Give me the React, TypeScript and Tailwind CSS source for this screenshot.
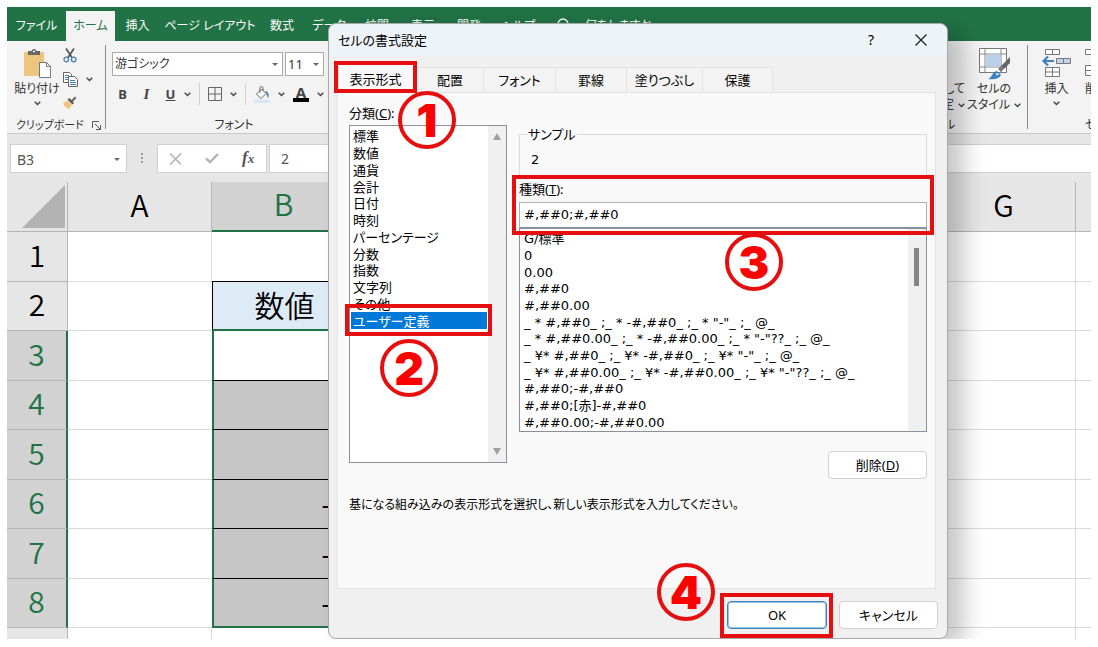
import type { ReactNode } from 'react'

const menuTabs = [
  { name: 'ファイル', width: 'w-[59px]' },
  { name: 'ホーム', width: 'w-[49px]', active: true },
  { name: '挿入', width: 'w-[45px]' },
  { name: 'ページ レイアウト', width: 'w-[100px]' },
  { name: '数式', width: 'w-[44px]' },
  { name: 'データ', width: 'w-[50px]' },
  { name: '校閲', width: 'w-[46px]' },
  { name: '表示', width: 'w-[46px]' },
  { name: '開発', width: 'w-[46px]' },
  { name: 'ヘルプ', width: 'w-[52px]' },
]

const dialogTabs = [
  { name: '配置', width: 'w-[67px]' },
  { name: 'フォント', width: 'w-[72px]' },
  { name: '罫線', width: 'w-[71px]' },
  { name: '塗りつぶし', width: 'w-[76px]' },
  { name: '保護', width: 'w-[70px]' },
]

const categories = [
  '標準',
  '数値',
  '通貨',
  '会計',
  '日付',
  '時刻',
  'パーセンテージ',
  '分数',
  '指数',
  '文字列',
  'その他',
  'ユーザー定義',
]

const formats = [
  'G/標準',
  '0',
  '0.00',
  '#,##0',
  '#,##0.00',
  '_ * #,##0_ ;_ * -#,##0_ ;_ * "-"_ ;_ @_ ',
  '_ * #,##0.00_ ;_ * -#,##0.00_ ;_ * "-"??_ ;_ @_ ',
  '_ ¥* #,##0_ ;_ ¥* -#,##0_ ;_ ¥* "-"_ ;_ @_ ',
  '_ ¥* #,##0.00_ ;_ ¥* -#,##0.00_ ;_ ¥* "-"??_ ;_ @_ ',
  '#,##0;-#,##0',
  '#,##0;[赤]-#,##0',
  '#,##0.00;-#,##0.00',
]

const rows = [
  { n: 1, value: '' },
  { n: 2, value: '数値' },
  { n: 3, value: '' },
  { n: 4, value: '' },
  { n: 5, value: '' },
  { n: 6, value: '-1' },
  { n: 7, value: '-2' },
  { n: 8, value: '-3' },
]

function Chevron() {
  return (
    <svg className="w-[7px] h-[5px] shrink-0" viewBox="0 0 7 5" fill="none" stroke="#444" strokeWidth={1.4}>
      <path d="M0.7 0.8 3.5 3.6 6.3 0.8" />
    </svg>
  )
}

function DownArrow() {
  return (
    <svg className="w-[6px] h-[3px] shrink-0" viewBox="0 0 6 3" fill="#666">
      <path d="M0 0h6L3 3z" />
    </svg>
  )
}

function PasteIcon() {
  return (
    <svg className="w-[28px] h-[31px]" viewBox="0 0 28 31">
      <path d="M1 4h20v24H1z" fill="#edc57f" />
      <path d="M5 3h3.500a2.600 2.600 0 0 1 5 0H17v4H5z" fill="#666" />
      <path d="M10 3.500h2" stroke="#fff" strokeWidth="1.500" />
      <path d="M16.500 14.500h7l4 4v11h-11z" fill="#fff" stroke="#777" />
      <path d="M23.500 14.500v4h4" fill="none" stroke="#777" />
    </svg>
  )
}

function CutIcon() {
  return (
    <svg className="w-[14px] h-[15px]" viewBox="0 0 14 15" fill="none">
      <path d="M3 0.500 9.300 10M11 0.500 4.700 10" stroke="#555" strokeWidth="1.700" />
      <circle cx="3.300" cy="11.500" r="2.300" stroke="#4a7fb5" strokeWidth="1.300" />
      <circle cx="10.700" cy="11.500" r="2.300" stroke="#4a7fb5" strokeWidth="1.300" />
    </svg>
  )
}

function CopyIcon() {
  return (
    <svg className="w-[15px] h-[15px]" viewBox="0 0 15 15" fill="#fff" stroke="#666">
      <path d="M0.500 0.500h6l2 2v8h-8z" />
      <path d="M2 3.500h4M2 5.500h4M2 7.500h4" stroke="#4a7fb5" />
      <path d="M5.500 4.500h6l3 3v7h-9z" />
      <path d="M7 8.500h5M7 10.500h6M7 12.500h6" stroke="#4a7fb5" />
    </svg>
  )
}

function BrushIcon() {
  return (
    <svg className="w-[14px] h-[13px]" viewBox="0 0 14 13">
      <path d="M0 7 5 4.500 9 9 6 13C3 12 1 10 0 7z" fill="#edc57f" />
      <path d="M4.500 3.500 6.500 2 11 7 9.500 8.500z" fill="#555" />
      <path d="M8 4.500 12 0.500 13.500 2 9.500 6z" fill="#666" />
    </svg>
  )
}

function LauncherIcon() {
  return (
    <svg className="w-[9px] h-[9px] shrink-0" viewBox="0 0 9 9" fill="none" stroke="#555">
      <path d="M0.500 7V0.500H7M3 3l5 5M8.500 4v4.500H4" />
    </svg>
  )
}

function BordersIcon() {
  return (
    <svg className="w-[14px] h-[14px]" viewBox="0 0 14 14" fill="none" stroke="#666">
      <path d="M0.500 0.500h13v13H0.500zM7 0.500v13M0.500 7h13" />
    </svg>
  )
}

function BucketIcon() {
  return (
    <svg className="w-[16px] h-[17px]" viewBox="0 0 16 17">
      <rect x="0" y="13.500" width="16" height="3.500" fill="#d6e8f7" />
      <path d="M2.500 8 7.500 3 12 7.500 7 12.500z" fill="#fff" stroke="#666" />
      <path d="M6 7V2a1.500 1.500 0 0 1 3 0v3" fill="none" stroke="#666" />
      <path d="M11 5c3 0 4.500 3 3.300 7C13 11 13 8 11 5z" fill="#4a7fb5" />
    </svg>
  )
}

function CellStyleIcon() {
  return (
    <svg className="w-[31px] h-[32px] shrink-0" viewBox="0 0 31 32">
      <path d="M0.500 0.500h27v24h-27z" fill="#fff" stroke="#777" />
      <path d="M6 0.500v24M22 0.500v24M0.500 6h27M0.500 19h27" fill="none" stroke="#888" />
      <path d="M6.500 6.500h15v12h-15z" fill="#bcd0ea" />
      <path d="M31 9v6l-6 6-3-3z" fill="#666" />
      <path d="M20.500 19.500l3 3" stroke="#777" strokeWidth="4" />
      <path d="M9 31c4-1 4-7 9-8l4 4c-2 4-7 5-13 4z" fill="#3f7fbd" />
      <path d="M17 26.500l2.500-.5" stroke="#fff" strokeWidth="1.500" />
    </svg>
  )
}

function InsertCellsIcon() {
  return (
    <svg className="w-[29px] h-[29px] shrink-0" viewBox="0 0 29 29" fill="#fff" stroke="#777">
      <path d="M3.500 0.500h14v5h-14zM10.500 0.500v5" />
      <path d="M14.500 9.500h14v5h-14zM21.500 9.500v5" fill="#c3d3ea" />
      <path d="M3.500 18.500h14v9h-14zM10.500 18.500v9M3.500 23h14" />
      <path d="M12 12H2M6 7.500 1.500 12 6 16.500" fill="none" stroke="#3f7fbd" strokeWidth="2.200" />
    </svg>
  )
}

function DeleteCellsIcon() {
  return (
    <svg className="w-[29px] h-[29px] shrink-0" viewBox="0 0 29 29" fill="#fff" stroke="#777">
      <path d="M0.500 0.500h14v5h-14zM7.500 0.500v5" />
      <path d="M12.500 9.500h14v5h-14z" fill="#c3d3ea" />
      <path d="M0.500 16.500h14v10h-14zM7.500 16.500v10M0.500 21.500h14" />
      <path d="M19 16l8 8M27 16l-8 8" fill="none" stroke="#d04a3a" strokeWidth="2.200" />
    </svg>
  )
}

function Divider() {
  return <div className="w-px h-[22px] bg-[#d0d0d0]" />
}

function Ribbon() {
  return (
    <div className="flex h-[93px] overflow-hidden bg-[#f3f3f3] border-b border-[#c8c8c8] text-xs leading-4 text-[#333] whitespace-nowrap">
      <div className="flex flex-col w-[98px] shrink-0 pt-[7px]">
        <div className="flex h-[69px]">
          <button className="flex flex-col items-center w-[56px] pl-1" aria-label="貼り付け">
            <PasteIcon />
            <span className="pt-[2px] pb-1">貼り付け</span>
            <Chevron />
          </button>
          <div className="flex flex-col items-start gap-[9px]">
            <button aria-label="切り取り"><CutIcon /></button>
            <button className="flex items-center gap-2" aria-label="コピー">
              <CopyIcon />
              <Chevron />
            </button>
            <button aria-label="書式のコピー"><BrushIcon /></button>
          </div>
        </div>
        <div className="flex items-center justify-between pl-[9px] pr-1 text-[11px]">
          クリップボード
          <LauncherIcon />
        </div>
      </div>
      <div className="w-px shrink-0 my-1 bg-[#8a8a8a]" />
      <div className="flex flex-col w-[256px] shrink-0 pt-[11px] pl-[6px]">
        <div className="flex gap-[2px]">
          <button className="flex items-center justify-between w-[171px] h-6 pl-[2px] pr-1 bg-white border border-[#ababab]" aria-label="フォント名">
            游ゴシック
            <DownArrow />
          </button>
          <button className="flex items-center justify-between w-[39px] h-6 pl-[2px] pr-1 bg-white border border-[#ababab] text-[13px]" aria-label="フォント サイズ">
            11
            <DownArrow />
          </button>
        </div>
        <div className="flex items-center h-[22px] mt-[7px] pl-[5px] text-[13px] text-[#444]">
          <button className="w-[11px] font-bold">B</button>
          <button className="w-[37px] font-['Liberation_Serif',serif] font-bold italic text-[15px]">I</button>
          <button className="w-[11px] font-bold underline">U</button>
          <div className="flex items-center gap-2 pl-2">
            <Chevron />
            <Divider />
            <BordersIcon />
            <Chevron />
            <Divider />
            <BucketIcon />
            <Chevron />
            <button className="w-[16px] h-[16px] border-b-4 border-black font-bold text-[15px] leading-[12px]">A</button>
            <Chevron />
          </div>
        </div>
        <div className="pt-3 pr-[6px] text-center">フォント</div>
      </div>
      <div className="flex flex-col w-[142px] shrink-0 ml-[518px] pt-[7px]">
        <div className="flex h-[69px]">
          <div className="flex flex-col items-end w-[85px] shrink-0 pt-[33px]">
            <span>テーブルとして</span>
            <span className="flex items-center gap-1">書式設定<Chevron /></span>
          </div>
          <button className="flex flex-col items-center w-[56px] shrink-0 ml-px">
            <CellStyleIcon />
            <span className="pt-px">セルの</span>
            <span className="flex items-center gap-1">スタイル<Chevron /></span>
          </button>
        </div>
        <div className="pl-8">スタイル</div>
      </div>
      <div className="w-px shrink-0 ml-[5px] my-1 bg-[#8a8a8a]" />
      <div className="flex shrink-0 pt-2 pl-[14px] gap-[14px]">
        <button className="flex flex-col items-center w-[29px]">
          <InsertCellsIcon />
          <span className="pt-[3px] pb-1">挿入</span>
          <Chevron />
        </button>
        <div className="flex flex-col h-[84px]">
          <DeleteCellsIcon />
          <span className="pt-[3px]">削除</span>
          <span className="mt-auto">セル</span>
        </div>
      </div>
    </div>
  )
}

function FormulaBar() {
  return (
    <div className="flex items-stretch h-12 pt-[10px] pb-[9px] pl-[3px] bg-[#e6e6e6] text-[#555] text-[14px]">
      <div className="flex items-center justify-between w-[117px] shrink-0 px-[6px] pt-px bg-white border border-[#d0d0d0]">
        B3
        <DownArrow />
      </div>
      <svg className="w-[30px] h-full shrink-0" viewBox="0 0 30 29" fill="#999">
        <path d="M14 9h2v2h-2zM14 13h2v2h-2zM14 17h2v2h-2z" />
      </svg>
      <div className="flex items-center w-[110px] shrink-0 pl-[11px] gap-[23px] bg-white border border-[#d0d0d0]">
        <button aria-label="キャンセル">
          <svg className="w-[13px] h-[12px]" viewBox="0 0 13 12" stroke="#b5b5b5" strokeWidth={1.7}>
            <path d="M1 0.500 12 11.500M12 0.500 1 11.500" />
          </svg>
        </button>
        <button aria-label="入力">
          <svg className="w-[14px] h-[11px]" viewBox="0 0 14 11" fill="none" stroke="#b5b5b5" strokeWidth={2.4}>
            <path d="M1 5.500 5 9 13 1" />
          </svg>
        </button>
        <button className="font-['Liberation_Serif',serif] italic font-bold text-[17px] leading-5" aria-label="関数の挿入">
          f<span className="text-[13px]">x</span>
        </button>
      </div>
      <input
        className="flex-1 min-w-0 ml-[2px] pl-[11px] bg-white border border-r-0 border-[#d0d0d0] outline-none"
        aria-label="数式バー"
        defaultValue="2"
      />
    </div>
  )
}

function Sheet() {
  const others = ['C', 'D', 'E', 'F', 'G', 'H']
  return (
    <table className="w-full table-fixed border-separate border-spacing-0 bg-white font-['Noto_Sans_CJK_JP',sans-serif] font-[350] text-[30px] leading-9 text-black">
      <colgroup>
        <col className="w-[61px]" />
        <col className="w-[144px]" />
        <col className="w-[144px]" />
        <col className="w-[144px]" />
        <col className="w-[144px]" />
        <col className="w-[144px]" />
        <col className="w-[144px]" />
        <col className="w-[144px]" />
        <col />
      </colgroup>
      <thead>
        <tr className="bg-[#e6e6e6]">
          <th className="h-[50px] p-0 border-b border-r border-[#b5b5b5]">
            <svg className="w-[43px] h-[43px] ml-auto mr-[2px]" viewBox="0 0 43 43" fill="#b3b3b3">
              <path d="M43 0v43H0z" />
            </svg>
          </th>
          <th className="p-0 pb-[6px] font-[350] border-b border-r border-[#b5b5b5]">A</th>
          <th className="p-0 pb-[6px] font-[350] border-b-2 border-r border-b-[#217346] border-r-[#b5b5b5] bg-[#d2d2d2] text-[#217346]">B</th>
          {others.map(c => (
            <th key={c} className="p-0 pb-[6px] font-[350] border-b border-r border-[#b5b5b5] last:border-r-0">
              {c === 'H' ? '' : c}
            </th>
          ))}
        </tr>
      </thead>
      <tbody>
        {rows.map(row => (
          <tr key={row.n} className="h-[50px] even:h-[49px]">
            <th
              className={
                row.n > 2
                  ? 'p-0 pb-[6px] font-[350] bg-[#d2d2d2] text-[#217346] border-b border-r-2 border-b-[#b5b5b5] border-r-[#217346]'
                  : 'p-0 pb-[6px] font-[350] bg-[#e6e6e6] border-b border-r border-[#b5b5b5]'
              }
            >
              {row.n}
            </th>
            <td className={row.n > 1 ? 'p-0 border-b border-[#d9d9d9]' : 'p-0 border-b border-r border-[#d9d9d9]'} />
            {row.n === 1 && <td className="p-0 border-b border-r border-b-black border-r-[#d9d9d9]" />}
            {row.n === 2 && (
              <td className="p-0 pb-1 text-center bg-[#ddebf7] border-l border-b-2 border-l-black border-b-[#217346]">{row.value}</td>
            )}
            {row.n === 3 && <td className="p-0 border-l-2 border-b border-l-[#217346] border-b-black" />}
            {row.n > 3 && (
              <td
                className={`p-0 pb-1 pr-2 text-right bg-[#c6c6c6] border-l-2 border-l-[#217346] ${
                  row.n === 8 ? 'border-b-2 border-b-[#217346]' : 'border-b border-b-black'
                }`}
              >
                {row.value}
              </td>
            )}
            {others.map(c => (
              <td key={c} className="p-0 border-b border-r border-[#d9d9d9] last:border-r-0" />
            ))}
          </tr>
        ))}
        <tr>
          <th className="h-[11px] p-0 bg-[#e6e6e6] border-r border-[#b5b5b5]" />
          <td className="p-0 border-r border-[#d9d9d9]" />
          <td className="p-0 border-r border-[#d9d9d9]" />
          {others.map(c => (
            <td key={c} className="p-0 border-r border-[#d9d9d9] last:border-r-0" />
          ))}
        </tr>
      </tbody>
    </table>
  )
}

function Step({ place, children }: { place: string; children: ReactNode }) {
  return (
    <div
      className={`absolute flex items-center justify-center w-[58px] h-[58px] rounded-full border-4 border-[#e60f0f] font-['Inter',sans-serif] font-black text-[46px] leading-none text-[#ff0000] ${place}`}
    >
      {children}
    </div>
  )
}

function Mark({ place }: { place: string }) {
  return <div className={`absolute border-4 border-[#e60f0f] pointer-events-none ${place}`} />
}

function FormatDialog() {
  return (
    <div
      role="dialog"
      aria-label="セルの書式設定"
      className="absolute left-[321px] top-4 w-[620px] bg-[#f0f0f0] border border-[#a8a8a8] rounded-lg shadow-[16px_8px_22px_rgba(0,0,0,0.22)] text-[13px] leading-5 text-black"
    >
      <div className="flex items-center h-8 pl-[9px] pr-5 bg-[#eef3f8] rounded-t-lg">
        <h1 className="flex-1">セルの書式設定</h1>
        <button className="w-[14px] mr-[37px] text-[14px]" aria-label="ヘルプ">?</button>
        <button aria-label="閉じる">
          <svg className="w-[12px] h-[12px]" viewBox="0 0 12 12" stroke="#222" strokeWidth={1.3}>
            <path d="M0.500 0.500 11.500 11.500M11.500 0.500 0.500 11.500" />
          </svg>
        </button>
      </div>

      <div className="flex items-end pt-2 pl-[9px]" role="tablist">
        <button role="tab" aria-selected className="relative z-10 w-[79px] h-[29px] -mb-px pr-1 bg-[#f9f9f9] border border-b-0 border-[#e3e3e3]">
          表示形式
        </button>
        {dialogTabs.map(tab => (
          <button key={tab.name} role="tab" className={`h-[25px] bg-[#f3f3f3] border border-b-0 border-l-0 border-[#e3e3e3] ${tab.width}`}>
            {tab.name}
          </button>
        ))}
      </div>

      <div className="ml-2 mr-[11px] h-[497px] pt-[10px] pl-[11px] pr-2 bg-[#f9f9f9] border border-[#e3e3e3]">
        <div className="flex gap-3">
          <div className="w-[158px] shrink-0">
            <div id="category">分類(<u>C</u>):</div>
            <div className="flex h-[338px] mt-[2px] bg-white border border-[#8a8f98]">
              <ul role="listbox" aria-labelledby="category" className="flex flex-col flex-1 h-[203px] pt-[2px] pl-px pr-px">
                {categories.map(c => (
                  <li
                    key={c}
                    role="option"
                    aria-selected={c === 'ユーザー定義'}
                    className="flex items-center flex-1 pl-[2px] leading-4 aria-selected:bg-[#0078d7] aria-selected:text-white"
                  >
                    {c}
                  </li>
                ))}
              </ul>
              <div className="flex flex-col items-center justify-between w-[18px] py-[7px] bg-[#f0f0f0]">
                <svg className="w-[8px] h-[7px]" viewBox="0 0 8 7" fill="#a0a0a0"><path d="M4 0 8 7H0z" /></svg>
                <svg className="w-[8px] h-[7px]" viewBox="0 0 8 7" fill="#a0a0a0"><path d="M4 7 8 0H0z" /></svg>
              </div>
            </div>
          </div>

          <div className="flex flex-col flex-1 min-w-0 pt-[21px]">
            <fieldset className="h-[54px] px-[7px] border border-[#dcdcdc]">
              <legend className="px-px">サンプル</legend>
              <div className="pl-1 pt-[6px] font-['DejaVu_Sans',sans-serif]">2</div>
            </fieldset>
            <label htmlFor="type" className="mt-px">種類(<u>T</u>):</label>
            <input
              id="type"
              defaultValue="#,##0;#,##0"
              className="h-[26px] mt-[3px] pl-1 pb-[2px] bg-white border border-[#b0b0b0] border-b-[#8a8f98] font-['DejaVu_Sans',sans-serif] outline-none"
            />
            <div className="flex bg-white border border-[#8a8f98]">
              <ul role="listbox" aria-label="表示形式の一覧" className="flex flex-col flex-1 h-[202px] pt-[2px] pl-1 font-['DejaVu_Sans','Noto_Sans_CJK_JP',sans-serif]">
                {formats.map(f => (
                  <li key={f} role="option" className="flex items-center flex-1 leading-4 whitespace-pre">{f}</li>
                ))}
              </ul>
              <div className="w-[18px] pl-[6px] pt-[19px] bg-[#f0f0f0]">
                <div className="w-[5px] h-[38px] bg-[#858585]" />
              </div>
            </div>
            <button className="self-end w-[99px] h-7 mt-[19px] bg-white border border-[#d0d0d0] rounded">
              削除(<u>D</u>)
            </button>
          </div>
        </div>
        <p className="mt-4 text-xs leading-5">基になる組み込みの表示形式を選択し、新しい表示形式を入力してください。</p>
      </div>

      <div className="flex justify-end gap-3 pt-3 pb-[9px] pr-[9px]">
        <button className="w-[100px] h-7 bg-white border border-[#3f83bd] ring-1 ring-inset ring-[#9cc3e6] rounded">OK</button>
        <button className="w-[99px] h-7 bg-white border border-[#d0d0d0] rounded">キャンセル</button>
      </div>

      <Mark place="z-10 left-[5px] top-[37px] w-[83px] h-8" />
      <Mark place="left-4 top-[280px] w-[147px] h-8" />
      <Mark place="left-[183px] top-[151px] w-[422px] h-[60px]" />
      <Mark place="left-[391px] top-[569px] w-[113px] h-[45px]" />
      <Step place="z-10 left-[69px] top-[67px]">1</Step>
      <Step place="left-[51px] top-[315px]">2</Step>
      <Step place="left-[396px] top-[209px]">3</Step>
      <Step place="left-[328px] top-[539px]">4</Step>
    </div>
  )
}

export default function App() {
  return (
    <div className="bg-white p-[7px] font-['Noto_Sans','Noto_Sans_CJK_JP',sans-serif] [font-feature-settings:'palt']">
      <main className="relative overflow-hidden">
        <nav className="flex items-end h-[34px] bg-[#217346] text-xs text-white">
          {menuTabs.map(tab => (
            <button
              key={tab.name}
              className={`h-[30px] shrink-0 whitespace-nowrap ${tab.width} ${tab.active ? 'bg-[#f3f3f3] text-[#217346]' : ''}`}
            >
              {tab.name}
            </button>
          ))}
          <label className="flex items-center gap-4 h-[30px] pl-[13px]">
            <svg className="w-[12px] h-[16px]" viewBox="0 0 12 16" fill="none" stroke="#fff" strokeWidth={1.3}>
              <circle cx="6" cy="6" r="5" />
              <path d="M4 11v4h4v-4" />
            </svg>
            何をしますか
          </label>
        </nav>
        <Ribbon />
        <FormulaBar />
        <Sheet />
        <FormatDialog />
      </main>
    </div>
  )
}
